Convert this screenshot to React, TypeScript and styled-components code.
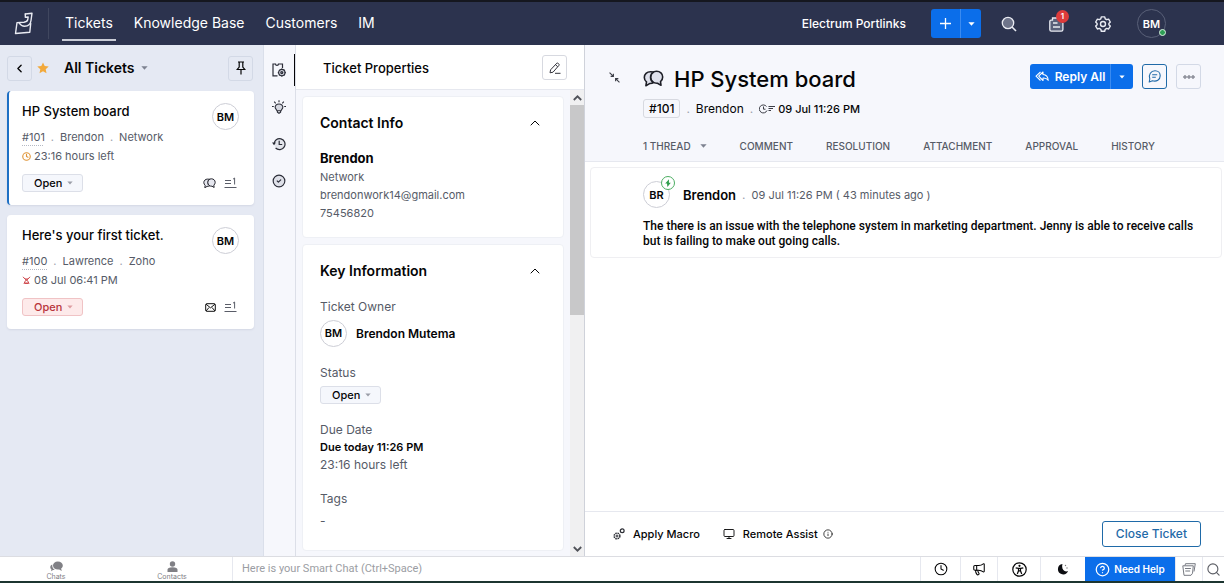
import React from "react";
import styled, { createGlobalStyle, css } from "styled-components";
import {
  ChevronLeft,
  ChevronUp,
  CircleCheck,
  CircleQuestionMark,
  Clock,
  Info,
  Megaphone,
  Monitor,
  Search,
} from "lucide-react";

const color = {
  navy: "#2c334e",
  blue: "#0b6eea",
  outline: "#1f6aa8",
  list: "#e5e9f3",
  pale: "#f6f7fc",
  line: "#e6e8ef",
  ink: "#050506",
  grey: "#565b67",
  red: "#b8343b",
};

const GlobalStyle = createGlobalStyle`
  * { box-sizing: border-box; }
  body { margin: 0; background: #fff; color: ${color.ink}; font: 400 12px/18px Inter, "Liberation Sans", sans-serif; }
  button, input, select { font: inherit; color: inherit; margin: 0; }
  button { cursor: pointer; }
  a { color: inherit; text-decoration: none; }
  h1, h2, h3, p { margin: 0; font-weight: inherit; }
  svg { display: block; flex: none; }
`;

const Page = styled.div`
  display: flex;
  flex-direction: column;
  height: 100vh;
  border-bottom: 2px solid #1c3530;
`;

/* ---------- top bar ---------- */

const TopBar = styled.header`
  display: flex;
  align-items: center;
  height: 45px;
  flex: none;
  padding: 0 58px 0 14px;
  border-top: 2px solid #15171f;
  background: ${color.navy};
  color: #fff;
`;

const Brand = styled.a`
  display: flex;
  align-items: center;
  height: 31px;
  padding-right: 14px;
  border-right: 1px solid #40475f;
`;

const Nav = styled.nav`
  display: flex;
  flex: 1;
  gap: 21px;
  padding-left: 16px;
`;

const NavLink = styled.a<{ $active?: boolean }>`
  padding: 4px 0 3px;
  font-size: 14px;
  line-height: 26px;
  border-bottom: 2px solid ${(p) => (p.$active ? "#c9ccd6" : "transparent")};
  ${(p) => p.$active && css`padding-left: 3px; padding-right: 3px; margin-left: -3px; margin-right: -3px;`}
`;

const Account = styled.span`
  font-size: 12px;
  font-weight: 500;
  margin-right: 25px;
`;

const SplitButton = styled.div<{ $tall?: boolean }>`
  display: flex;
  height: ${(p) => (p.$tall ? 29 : 25)}px;
  border-radius: 3px;
  overflow: hidden;
  background: ${color.blue};
`;

const SplitPart = styled.button<{ $divided?: boolean; $width: number }>`
  display: flex;
  align-items: center;
  justify-content: center;
  gap: 6px;
  width: ${(p) => p.$width}px;
  padding: 0;
  border: 0;
  border-left: ${(p) => (p.$divided ? "1px solid #3b8bf0" : "0")};
  background: none;
  color: #fff;
  font-size: 12px;
  font-weight: 600;
`;

const TopIcons = styled.div`
  display: flex;
  align-items: center;
  gap: 27px;
  margin: 0 24px 0 18px;
`;

const IconButton = styled.button`
  position: relative;
  display: grid;
  place-items: center;
  width: 20px;
  height: 20px;
  padding: 0;
  border: 0;
  background: none;
`;

const Count = styled.span`
  position: absolute;
  top: -4px;
  right: -3px;
  width: 13px;
  height: 13px;
  border-radius: 50%;
  background: #de3b3b;
  color: #fff;
  font-size: 8px;
  font-weight: 600;
  line-height: 13px;
  text-align: center;
`;

const Avatar = styled.span<{ $dark?: boolean }>`
  position: relative;
  flex: none;
  display: grid;
  place-items: center;
  width: ${(p) => (p.$dark ? 29 : 27)}px;
  height: ${(p) => (p.$dark ? 29 : 27)}px;
  border: 1px solid ${(p) => (p.$dark ? "#596078" : "#cdced6")};
  border-radius: 50%;
  background: ${(p) => (p.$dark ? "transparent" : "#fff")};
  font-size: 11px;
  font-weight: 600;
`;

const Online = styled.i`
  position: absolute;
  right: -1px;
  bottom: 1px;
  width: 7px;
  height: 7px;
  border: 1px solid #d9f0e0;
  border-radius: 50%;
  background: #2e9e55;
`;

const ChannelBadge = styled.span`
  position: absolute;
  top: -6px;
  right: -6px;
  display: grid;
  place-items: center;
  width: 14px;
  height: 14px;
  border: 1px solid #4cae62;
  border-radius: 50%;
  background: #fff;
`;

/* ---------- columns ---------- */

const Columns = styled.div`
  display: flex;
  flex: 1;
  min-height: 0;
`;

const ListColumn = styled.aside`
  display: flex;
  flex-direction: column;
  width: 264px;
  flex: none;
  border-right: 1px solid #dadfea;
  background: ${color.list};
`;

const ListHeader = styled.div`
  display: flex;
  align-items: center;
  height: 46px;
  padding: 0 10px 0 7px;
`;

const ViewPicker = styled.button`
  display: flex;
  align-items: center;
  gap: 6px;
  margin-right: auto;
  padding: 0 0 0 15px;
  border: 0;
  background: none;
  font-size: 14px;
  font-weight: 600;
  line-height: 20px;
`;

const BoxButton = styled.button<{ $border?: string; $color?: string; $bg?: string }>`
  display: grid;
  place-items: center;
  width: 25px;
  height: 25px;
  padding: 0;
  border: 1px solid ${(p) => p.$border ?? "#d3d9e6"};
  border-radius: 3px;
  background: ${(p) => p.$bg ?? "transparent"};
  color: ${(p) => p.$color ?? color.ink};
`;

const StarBox = styled.span`
  margin-left: 5px;
`;

const TicketList = styled.div`
  display: flex;
  flex-direction: column;
  gap: 10px;
  padding: 0 9px 0 7px;
`;

const TicketCard = styled.article<{ $selected?: boolean }>`
  display: grid;
  grid-template-columns: 1fr auto;
  padding: 10px 15px 13px 14px;
  border-left: 1px solid #fff;
  border-radius: 4px;
  background: #fff;
  box-shadow: 0 1px 2px rgba(60, 70, 110, 0.1);
  ${(p) => p.$selected && css`border-left: 2px solid #1d6fc4; padding-left: 13px;`}
`;

const TicketTitle = styled.h2`
  font-size: 13px;
  line-height: 20px;
  font-weight: 500;
  margin-bottom: 7px;
`;

const TicketText = styled.div`
  font-size: 11px;
  color: ${color.grey};
`;

const Meta = styled.div`
  display: flex;
  gap: 6px;
  line-height: 18px;
`;

const TicketId = styled.a`
  text-decoration: underline dotted #b5b9c4;
  text-underline-offset: 4px;
`;

const Due = styled.div`
  display: flex;
  align-items: center;
  gap: 3px;
  line-height: 20px;
`;

const AvatarCell = styled.div`
  padding-top: 2px;
`;

const TicketFoot = styled.div`
  grid-column: 1 / -1;
  display: flex;
  align-items: center;
  justify-content: space-between;
  margin-top: 8px;
`;

const FootIcons = styled.div`
  display: flex;
  align-items: center;
  gap: 8px;
  padding-right: 2px;
`;

const StatusWrap = styled.span<{ $red?: boolean }>`
  position: relative;
  display: flex;
  width: 61px;
  color: ${(p) => (p.$red ? color.red : color.ink)};
  > svg {
    position: absolute;
    right: 10px;
    top: 7px;
    pointer-events: none;
  }
`;

const StatusSelect = styled.select<{ $red?: boolean }>`
  appearance: none;
  width: 100%;
  height: 18px;
  padding: 0 0 0 11px;
  border: 1px solid ${(p) => (p.$red ? "#f0c3c5" : "#dcdfe8")};
  border-radius: 3px;
  background: ${(p) => (p.$red ? "#fdeaea" : "#f5f7fc")};
  font-size: 11px;
  font-weight: 500;
  line-height: 16px;
`;

const Rail = styled.nav`
  display: flex;
  flex-direction: column;
  gap: 5px;
  width: 32px;
  flex: none;
  padding-top: 9px;
  border-right: 1px solid #dcdfe8;
  background: ${color.pale};
`;

const RailButton = styled.button<{ $active?: boolean }>`
  display: grid;
  place-items: center;
  height: 32px;
  padding: 0;
  border: 0;
  border-right: 1px solid ${(p) => (p.$active ? color.ink : "transparent")};
  background: none;
  color: #2b2d38;
`;

/* ---------- ticket properties ---------- */

const Properties = styled.section`
  display: flex;
  flex-direction: column;
  width: 289px;
  flex: none;
  border-right: 1px solid #cfd2da;
`;

const PropertiesHeader = styled.div`
  display: flex;
  align-items: center;
  justify-content: space-between;
  height: 45px;
  flex: none;
  padding: 1px 17px 0 27px;
  border-bottom: 1px solid ${color.line};
`;

const PanelTitle = styled.h2`
  font-size: 13px;
  line-height: 20px;
  font-weight: 500;
`;

const PropertiesBody = styled.div`
  display: flex;
  flex: 1;
  min-height: 0;
`;

const CardStack = styled.div`
  display: flex;
  flex-direction: column;
  gap: 6px;
  flex: 1;
  padding: 6px;
  overflow: hidden;
  background: ${color.pale};
`;

const Card = styled.section`
  flex: none;
  padding: 16px 18px 15px 17px;
  border: 1px solid #eef0f5;
  border-radius: 4px;
  background: #fff;
`;

const CardHead = styled.div`
  display: flex;
  align-items: center;
  justify-content: space-between;
`;

const CardTitle = styled.h3`
  font-size: 14px;
  line-height: 20px;
  font-weight: 600;
`;

const ContactLines = styled.div`
  display: flex;
  flex-direction: column;
  margin-top: 15px;
  color: ${color.grey};
  font-size: 11px;
`;

const ContactName = styled.strong`
  color: ${color.ink};
  font-size: 13px;
  line-height: 20px;
  font-weight: 700;
`;

const Fields = styled.div`
  display: flex;
  flex-direction: column;
  gap: 17px;
  margin-top: 17px;
  padding-bottom: 6px;
  color: ${color.grey};
  font-size: 12px;
`;

const Field = styled.div<{ $gap?: number }>`
  display: flex;
  flex-direction: column;
  gap: ${(p) => p.$gap ?? 0}px;
  line-height: 17px;
`;

const FieldLabel = styled.label`
  line-height: 18px;
`;

const Strong = styled.strong<{ $small?: boolean }>`
  color: ${color.ink};
  font-size: ${(p) => (p.$small ? 11 : 12)}px;
  font-weight: 600;
`;

const Owner = styled.div`
  display: flex;
  align-items: center;
  gap: 9px;
  color: ${color.ink};
`;

const ScrollTrack = styled.div`
  display: flex;
  flex-direction: column;
  width: 14px;
  flex: none;
  background: #f0f0f1;
  color: #505258;
`;

const ScrollArrow = styled.button`
  display: grid;
  place-items: center;
  height: 15px;
  padding: 0;
  border: 0;
  background: none;
`;

const ScrollThumb = styled.div`
  height: 45%;
  margin-bottom: auto;
  background: #c8c8c9;
`;

/* ---------- conversation ---------- */

const Conversation = styled.main`
  display: flex;
  flex-direction: column;
  flex: 1;
  min-width: 0;
`;

const TicketHeader = styled.div`
  display: grid;
  grid-template-columns: 34px 1fr auto;
  flex: none;
  height: 117px;
  padding: 19px 23px 0 24px;
  border-bottom: 1px solid ${color.line};
  background: ${color.pale};
`;

const Collapse = styled.button`
  align-self: start;
  width: 12px;
  margin-top: 8px;
  padding: 0;
  border: 0;
  background: none;
`;

const Subject = styled.h1`
  display: flex;
  align-items: center;
  gap: 10px;
  font-size: 22px;
  line-height: 30px;
  font-weight: 500;
`;

const SubLine = styled.div`
  display: flex;
  align-items: center;
  gap: 6px;
  margin-top: 5px;
  font-size: 12px;
`;

const IdBadge = styled.span`
  padding: 0 5px;
  border: 1px solid #d7d9e0;
  border-radius: 3px;
  line-height: 17px;
  font-weight: 500;
`;

const Dot = styled.span`
  color: #9da1ad;
`;

const Stamp = styled.span`
  display: flex;
  align-items: center;
  gap: 3px;
  font-size: 11px;
  font-weight: 500;
`;

const Actions = styled.div`
  display: flex;
  align-items: flex-start;
  gap: 9px;
`;

const Tabs = styled.div`
  grid-column: 2 / -1;
  display: flex;
  align-items: center;
  gap: 33px;
`;

const Tab = styled.button`
  display: flex;
  align-items: center;
  gap: 9px;
  padding: 0;
  border: 0;
  background: none;
  color: ${color.grey};
  font-size: 10px;
  font-weight: 500;
  line-height: 18px;
  white-space: nowrap;
`;

const ThreadArea = styled.div`
  flex: 1;
  padding: 5px 2px 0 5px;
`;

const Thread = styled.article`
  display: flex;
  flex-direction: column;
  gap: 11px;
  padding: 13px 20px 8px 52px;
  border: 1px solid #efeff2;
  border-radius: 4px;
`;

const ThreadHead = styled.div`
  display: flex;
  align-items: center;
  gap: 6px;
`;

const ThreadName = styled.strong`
  margin-left: 7px;
  font-size: 13px;
  font-weight: 600;
`;

const ThreadTime = styled.span`
  color: ${color.grey};
  font-size: 11px;
`;

const Message = styled.p`
  font-family: Roboto, "Liberation Sans", sans-serif;
  font-size: 12px;
  font-weight: 500;
  line-height: 15px;
`;

const ActionBar = styled.footer`
  display: flex;
  align-items: center;
  gap: 23px;
  height: 45px;
  flex: none;
  padding: 0 23px 0 28px;
  border-top: 1px solid ${color.line};
`;

const PlainAction = styled.button`
  display: flex;
  align-items: center;
  gap: 8px;
  padding: 0;
  border: 0;
  background: none;
  font-size: 11px;
  font-weight: 500;
`;

const AssistLabel = styled.span`
  display: flex;
  align-items: center;
  gap: 5px;
`;

const CloseButton = styled.button`
  height: 26px;
  margin-left: auto;
  padding: 0 13px;
  border: 1px solid ${color.outline};
  border-radius: 3px;
  background: #fff;
  color: ${color.outline};
  font-size: 12px;
  font-weight: 500;
`;

/* ---------- chat bar ---------- */

const ChatBar = styled.footer`
  display: flex;
  height: 25px;
  flex: none;
  border-top: 1px solid #dcdde2;
  background: #fff;
`;

const ChatTabs = styled.div`
  display: grid;
  grid-template-columns: 112px 120px;
  width: 233px;
  border-right: 1px solid ${color.line};
`;

const ChatTab = styled.button`
  display: flex;
  flex-direction: column;
  align-items: center;
  padding: 4px 0 0;
  border: 0;
  background: none;
  color: #808085;
  font-size: 7px;
  line-height: 9px;
`;

const ChatInput = styled.input`
  flex: 1;
  min-width: 0;
  padding: 0 9px;
  border: 0;
  background: none;
  font-family: Roboto, "Liberation Sans", sans-serif;
  font-size: 11px;
  &::placeholder {
    color: #9b9da3;
    opacity: 1;
  }
`;

const BarButton = styled.button<{ $width: number; $color?: string }>`
  display: grid;
  place-items: center;
  width: ${(p) => p.$width}px;
  flex: none;
  padding: 0;
  border: 0;
  border-left: 1px solid ${color.line};
  background: none;
  color: ${(p) => p.$color ?? color.ink};
`;

const HelpButton = styled.button`
  display: flex;
  align-items: center;
  justify-content: center;
  gap: 4px;
  width: 90px;
  flex: none;
  padding: 0;
  border: 0;
  background: ${color.blue};
  color: #fff;
  font-size: 10px;
  font-weight: 600;
  white-space: nowrap;
`;

/* ---------- drawings ---------- */

const Caret = ({ fill = "currentColor", size = 7 }: { fill?: string; size?: number }) => (
  <svg width={size} height="4" viewBox="0 0 7 4" aria-hidden>
    <path d="M0.4 0.2h6.2L3.5 3.8z" fill={fill} />
  </svg>
);

const Logo = () => (
  <svg width="20" height="24" viewBox="0 0 20 24" fill="none" stroke="#e9ebf2" strokeWidth="1.4" strokeLinejoin="round" strokeLinecap="round">
    <path d="M11.300 2L18 1.200 17 8.500C16.600 11.800 14 14.200 10.500 14.200 8.500 14.200 6.500 13 5 10.800" />
    <path d="M11.300 2V5.300L14.200 5 13.700 7.800C13.300 9.300 12 10 10 10.200L3 10.600 1.500 21.500 15.800 20.200 16.700 11.500" />
  </svg>
);

const StarIcon = () => (
  <svg width="12" height="12" viewBox="0 0 12 12">
    <path d="M6 .4l1.700 3.700 4 .5-3 2.700.8 4L6 9.300l-3.500 2 .8-4-3-2.700 4-.5z" fill="#f2a93b" />
  </svg>
);

const PinIcon = () => (
  <svg width="10" height="14" viewBox="0 0 10 14" fill="none" stroke="currentColor" strokeWidth="1.200">
    <path d="M2 1h6M3.200 1v5L1.200 8.500h7.600L6.800 6V1M5 8.500V13.500" />
  </svg>
);

const ChatsIcon = ({ size = 12, fill = "none" }: { size?: number; fill?: string }) => (
  <svg width={size} height={(size * 10) / 12} viewBox="0 0 24 20" fill={fill} stroke="#1d1e26" strokeWidth="1.800" strokeLinejoin="round">
    <path d="M15.500 1.500c4 0 7 2.800 7 6.500 0 2.200-1 4-2.500 5.200l.6 4.300-4-2.300c-4.500.3-8-2.700-8-7 0-3.800 3-6.700 6.900-6.700z" />
    <path d="M8.500 2C4.500 2 1.500 4.800 1.500 8.500c0 2 1 3.800 2.500 5L3.300 18l4.200-2.500c1.800.1 3.300-.2 4.600-1C9.800 13.200 8.600 11 8.600 8.200c0-2.600 1.400-4.700 3.500-5.800C11 2.100 9.800 2 8.500 2z" />
  </svg>
);

const CountIcon = () => (
  <svg width="13" height="12" viewBox="0 0 13 12" fill="none" stroke="#5a5d68" strokeWidth="1">
    <path d="M1 3.500h6M1 6.500h6M0.500 10.500h12M9 2.200l1.600-1.200V7.500" />
  </svg>
);

const MailIcon = () => (
  <svg width="11" height="9" viewBox="0 0 11 9" fill="none" stroke="#111" strokeWidth="1">
    <rect x=".7" y=".7" width="9.600" height="7.600" rx="1" />
    <path d="M1 1.200l4.500 3.600L10 1.200M1 8l3-3.500M10 8L7 4.500" />
  </svg>
);

const OverdueIcon = () => (
  <svg width="9" height="9" viewBox="0 0 9 9" fill="none" stroke="#cf4a4e" strokeWidth="1">
    <path d="M1 .8l2 2.200h3L8 .8M3 3l3 2.200L7 8M6 3L3 5.200 2 8" />
    <path d="M3 6.500h3L6.500 8h-4z" fill="#cf4a4e" stroke="none" />
  </svg>
);

const PropertiesIcon = () => (
  <svg width="14" height="14" viewBox="0 0 14 14" fill="none" stroke="currentColor" strokeWidth="1.200">
    <path d="M5.500 12.800H1V1h2.500c0 1.800 3 1.800 3 0H10.500v4" />
    <circle cx="9.800" cy="9.600" r="3.200" fill="#d5d7e0" />
    <circle cx="9.800" cy="9.600" r="1" />
    <path d="M9.800 5.600v1M9.800 12.600v1M5.800 9.600h1M12.800 9.600h1M7 6.800l.6.600M12 11.800l.6.600M7 12.400l.6-.6M12 7.400l.6-.6" />
  </svg>
);

const BulbIcon = () => (
  <svg width="14" height="14" viewBox="0 0 14 14" fill="none" stroke="currentColor" strokeWidth="1.100">
    <path d="M5 10.800L3.200 7.800C2.800 5.500 4.500 4 7 4s4.200 1.500 3.800 3.800L9 10.800z" fill="#d5d7e0" />
    <path d="M5.400 11v1.200L7 13.300l1.600-1.100V11M7 .3v2M2.200 1.600l1.500 1.700M11.800 1.600l-1.500 1.700M0 6.500h1.800M12.200 6.500H14" />
  </svg>
);

const HistoryIcon = () => (
  <svg width="14" height="14" viewBox="0 0 14 14" fill="none" stroke="currentColor" strokeWidth="1.200">
    <path d="M2 7a5.500 5.500 0 1 1 1.600 4" fill="#e3e5ec" />
    <path d="M0 5.600h4L2 8.300z" fill="currentColor" stroke="none" />
    <path d="M7.200 3.800v3.700h3" />
  </svg>
);

const EditIcon = () => (
  <svg width="12" height="12" viewBox="0 0 12 12" fill="none" stroke="#33343c" strokeWidth="1">
    <path d="M1 10.800l.6-3L7.800 1.200c.8-.8 3 1.200 2.200 2.100L4 10.200zM6.500 2.700l2.200 2M6 11.300h5.500" />
  </svg>
);

const SearchTop = () => (
  <svg width="16" height="16" viewBox="0 0 16 16" fill="none" stroke="#e9ebf2" strokeWidth="1.300">
    <circle cx="7" cy="7" r="5.700" fill="#6e748a" />
    <path d="M11 11l4 4" strokeWidth="1.600" />
  </svg>
);

const NotesIcon = () => (
  <svg width="15" height="16" viewBox="0 0 15 16" fill="none" stroke="#e9ebf2" strokeWidth="1.300">
    <path d="M9 2H3.500v2.200H2C1.200 4.200.8 4.600.8 5.400V13.500c0 1 .6 1.600 1.500 1.600h10c1 0 1.600-.6 1.600-1.600V7" fill="#59607a" />
    <path d="M4 7h4.500M4 11h7" />
  </svg>
);

const GearIcon = () => (
  <svg width="16" height="16" viewBox="0 0 16 16" fill="none" stroke="#e9ebf2" strokeWidth="1.400" strokeLinejoin="round">
    <path d="M6.300.9h3.400l.5 1.900 1.500.9 1.900-.6 1.700 2.900-1.400 1.400v1.300l1.400 1.400-1.700 2.900-1.900-.6-1.500.9-.5 1.900H6.300l-.5-1.900-1.500-.9-1.900.6L.7 10.100l1.400-1.400V7.400L.7 6l1.700-2.900 1.900.6 1.500-.9z" />
    <circle cx="8" cy="8" r="2.500" />
  </svg>
);

const ReplyAllIcon = () => (
  <svg width="14" height="11" viewBox="0 0 14 11" fill="none" stroke="#fff" strokeWidth="1.100" strokeLinejoin="round">
    <path d="M5.500 1L1 5.200l4.500 4.300" />
    <path d="M8 1L3.700 5.200 8 9.500V7c2.500-.2 4 .5 5.200 2.300C13 6 11.200 3.700 8 3.500z" />
  </svg>
);

const CommentIcon = () => (
  <svg width="13" height="13" viewBox="0 0 13 13" fill="none" stroke="currentColor" strokeWidth="1.100" strokeLinejoin="round">
    <path d="M1.200 12l.6-3C.2 4.500 3 .8 7 .8c3 0 5.200 2.200 5.200 5 0 4-3.700 6.200-7.700 5z" />
    <path d="M4.200 4.800h5M4.200 7.200h3.600" />
  </svg>
);

const MoreIcon = () => (
  <svg width="12" height="4" viewBox="0 0 12 4" fill="#b9bbc4" stroke="#686b76" strokeWidth=".8">
    <circle cx="2" cy="2" r="1.300" />
    <circle cx="6" cy="2" r="1.300" />
    <circle cx="10" cy="2" r="1.300" />
  </svg>
);

const CollapseIcon = () => (
  <svg width="11" height="11" viewBox="0 0 10 10" fill="none" stroke="#3b3d46" strokeWidth="1">
    <path d="M.5.5L4 4M4 1.500V4H1.500M9.500 9.500L6 6M6 8.500V6h2.500" />
  </svg>
);

const StampIcon = () => (
  <svg width="16" height="10" viewBox="0 0 16 10" fill="none" stroke="#3b3d46" strokeWidth="1">
    <path d="M7.500 2.500A4 4 0 1 0 8 6.500M4.500 2.500V5.200h2M9.500 2.500H16M9.500 4.500H14M9.500 6.500H12" />
  </svg>
);

const MacroIcon = () => (
  <svg width="12" height="12" viewBox="0 0 12 12" fill="none" stroke="#2b2d34">
    <circle cx="4" cy="8" r="2.900" strokeWidth="1.400" strokeDasharray="1.600 .7" />
    <circle cx="4" cy="8" r="1" />
    <circle cx="9.200" cy="2.800" r="1.900" strokeWidth="1.200" />
  </svg>
);

const AccessIcon = () => (
  <svg width="15" height="15" viewBox="0 0 15 15" fill="none" stroke="currentColor" strokeWidth="1.200">
    <circle cx="7.500" cy="7.500" r="6.700" />
    <circle cx="7.500" cy="3.800" r="1.100" fill="currentColor" stroke="none" />
    <path d="M3.700 5.800l2.600.6h2.400l2.600-.6M6.500 6.400v2.400L5.300 12M8.500 6.400v2.400L9.700 12M6.500 8.800h2" />
  </svg>
);

const MoonIcon = () => (
  <svg width="12" height="12" viewBox="0 0 12 12" fill="#0c0d11">
    <path d="M5.500 1A5.200 5.200 0 1 0 11 8C7.500 9.500 4 6.500 5.500 1z" />
    <circle cx="8.500" cy="2.500" r=".7" fill="#777" />
    <circle cx="10" cy="5" r=".7" fill="#777" />
  </svg>
);

const NotesStack = () => (
  <svg width="14" height="13" viewBox="0 0 14 13" fill="none" stroke="#777a82" strokeWidth="1" strokeLinejoin="round">
    <path d="M3 2.500L3.500.7h9.800L12 8.500" />
    <path d="M.8 2.800h10.500l-.8 7.500-1.500 2H2zM3 5.500h5.900M3.300 8h4.800" />
  </svg>
);

const ChatsSolid = () => (
  <svg width="13" height="11" viewBox="0 0 13 11" fill="currentColor">
    <path d="M7.800.5c3 0 5 1.700 5 4 0 1.300-.7 2.400-1.700 3.100l.7 2.400-2.600-1.500c-3.400.5-6.200-1.200-6.200-4 0-2.300 2-4 4.800-4z" />
    <path d="M2.300 3.500C1 4 .3 5 .3 6.200c0 1 .5 1.700 1.200 2.300L1 10.200l2-1.200 1.800.1C3 8 2 6 2.300 3.500z" />
  </svg>
);

const PersonSolid = () => (
  <svg width="11" height="11" viewBox="0 0 11 11" fill="currentColor">
    <circle cx="5.500" cy="3" r="2.700" />
    <path d="M.5 11V8.800C.5 7.200 2 6.300 5.500 6.300s5 .9 5 2.500V11z" />
  </svg>
);

const BoltIcon = () => (
  <svg width="8" height="8" viewBox="0 0 8 8" fill="#2f9e4c">
    <path d="M5 .3L1.200 4.400h1.800L3.400 8 6.800 3.800H4.900z" />
  </svg>
);

/* ---------- composition ---------- */

type Ticket = {
  id: string;
  title: string;
  contact: string;
  account: string;
  due: string;
  overdue?: boolean;
  selected?: boolean;
};

const tickets: Ticket[] = [
  { id: "#101", title: "HP System board", contact: "Brendon", account: "Network", due: "23:16 hours left", selected: true },
  { id: "#100", title: "Here's your first ticket.", contact: "Lawrence", account: "Zoho", due: "08 Jul 06:41 PM", overdue: true },
];

const StatusPicker = ({ red, id, label }: { red?: boolean; id?: string; label?: string }) => (
  <StatusWrap $red={red}>
    <StatusSelect $red={red} id={id} aria-label={label} defaultValue="Open">
      <option>Open</option>
    </StatusSelect>
    <Caret fill={red ? "#dd9ca0" : "#9a9da7"} size={6} />
  </StatusWrap>
);

const TicketItem = ({ ticket }: { ticket: Ticket }) => (
  <TicketCard $selected={ticket.selected}>
    <div>
      <TicketTitle>{ticket.title}</TicketTitle>
      <TicketText>
        <Meta>
          <TicketId href="#">{ticket.id}</TicketId>
          <Dot>.</Dot>
          <span>{ticket.contact}</span>
          <Dot>.</Dot>
          <span>{ticket.account}</span>
        </Meta>
        <Due>
          {ticket.overdue ? <OverdueIcon /> : <Clock size={9} color="#e0963a" strokeWidth={3} />}
          {ticket.due}
        </Due>
      </TicketText>
    </div>
    <AvatarCell>
      <Avatar>BM</Avatar>
    </AvatarCell>
    <TicketFoot>
      <StatusPicker red={ticket.overdue} label={`Status of ${ticket.id}`} />
      <FootIcons>
        {ticket.overdue ? <MailIcon /> : <ChatsIcon size={13} fill="#e6e7ef" />}
        <CountIcon />
      </FootIcons>
    </TicketFoot>
  </TicketCard>
);

const App = () => (
  <Page>
    <GlobalStyle />
    <TopBar>
      <Brand href="#" aria-label="Home">
        <Logo />
      </Brand>
      <Nav>
        <NavLink href="#" $active>Tickets</NavLink>
        <NavLink href="#">Knowledge Base</NavLink>
        <NavLink href="#">Customers</NavLink>
        <NavLink href="#">IM</NavLink>
      </Nav>
      <Account>Electrum Portlinks</Account>
      <SplitButton $tall>
        <SplitPart $width={29} aria-label="Add">
          <svg width="11" height="11" viewBox="0 0 11 11" stroke="#fff" strokeWidth="1.300">
            <path d="M5.500 0v11M0 5.500h11" />
          </svg>
        </SplitPart>
        <SplitPart $width={21} $divided aria-label="Add options">
          <Caret />
        </SplitPart>
      </SplitButton>
      <TopIcons>
        <IconButton aria-label="Search"><SearchTop /></IconButton>
        <IconButton aria-label="Notifications">
          <NotesIcon />
          <Count>1</Count>
        </IconButton>
        <IconButton aria-label="Settings"><GearIcon /></IconButton>
      </TopIcons>
      <Avatar $dark>
        BM
        <Online />
      </Avatar>
    </TopBar>

    <Columns>
      <ListColumn>
        <ListHeader>
          <BoxButton aria-label="Back"><ChevronLeft size={13} strokeWidth={2.500} /></BoxButton>
          <StarBox><StarIcon /></StarBox>
          <ViewPicker>
            All Tickets
            <Caret fill="#7d8290" />
          </ViewPicker>
          <BoxButton aria-label="Pin"><PinIcon /></BoxButton>
        </ListHeader>
        <TicketList>
          {tickets.map((ticket) => (
            <TicketItem key={ticket.id} ticket={ticket} />
          ))}
        </TicketList>
      </ListColumn>

      <Rail>
        <RailButton $active aria-label="Properties"><PropertiesIcon /></RailButton>
        <RailButton aria-label="Suggestions"><BulbIcon /></RailButton>
        <RailButton aria-label="Timeline"><HistoryIcon /></RailButton>
        <RailButton aria-label="Approvals"><CircleCheck size={14} fill="#dfe1e9" /></RailButton>
      </Rail>

      <Properties>
        <PropertiesHeader>
          <PanelTitle>Ticket Properties</PanelTitle>
          <BoxButton $border="#d7d9e0" $bg="#fff" aria-label="Edit"><EditIcon /></BoxButton>
        </PropertiesHeader>
        <PropertiesBody>
          <CardStack>
            <Card>
              <CardHead>
                <CardTitle>Contact Info</CardTitle>
                <IconButton aria-label="Collapse"><ChevronUp size={16} strokeWidth={1.500} /></IconButton>
              </CardHead>
              <ContactLines>
                <ContactName>Brendon</ContactName>
                <span>Network</span>
                <span>brendonwork14@gmail.com</span>
                <span>75456820</span>
              </ContactLines>
            </Card>
            <Card>
              <CardHead>
                <CardTitle>Key Information</CardTitle>
                <IconButton aria-label="Collapse"><ChevronUp size={16} strokeWidth={1.500} /></IconButton>
              </CardHead>
              <Fields>
                <Field $gap={4}>
                  <FieldLabel as="span">Ticket Owner</FieldLabel>
                  <Owner>
                    <Avatar>BM</Avatar>
                    <Strong>Brendon Mutema</Strong>
                  </Owner>
                </Field>
                <Field $gap={4}>
                  <FieldLabel htmlFor="status">Status</FieldLabel>
                  <StatusPicker id="status" />
                </Field>
                <Field>
                  <FieldLabel as="span">Due Date</FieldLabel>
                  <Strong $small>Due today 11:26 PM</Strong>
                  <span>23:16 hours left</span>
                </Field>
                <Field $gap={4}>
                  <FieldLabel as="span">Tags</FieldLabel>
                  <span>-</span>
                </Field>
              </Fields>
            </Card>
          </CardStack>
          <ScrollTrack>
            <ScrollArrow aria-label="Scroll up">
              <svg width="9" height="6" viewBox="0 0 9 6" fill="none" stroke="currentColor" strokeWidth="1.800"><path d="M.8 5l3.700-3.700L8.200 5" /></svg>
            </ScrollArrow>
            <ScrollThumb />
            <ScrollArrow aria-label="Scroll down">
              <svg width="9" height="6" viewBox="0 0 9 6" fill="none" stroke="currentColor" strokeWidth="1.800"><path d="M.8 1l3.700 3.700L8.200 1" /></svg>
            </ScrollArrow>
          </ScrollTrack>
        </PropertiesBody>
      </Properties>

      <Conversation>
        <TicketHeader>
          <Collapse aria-label="Collapse ticket"><CollapseIcon /></Collapse>
          <div>
            <Subject>
              <ChatsIcon size={21} fill="#dfe1ec" />
              HP System board
            </Subject>
            <SubLine>
              <IdBadge>#101</IdBadge>
              <Dot>.</Dot>
              <span>Brendon</span>
              <Dot>.</Dot>
              <Stamp><StampIcon />09 Jul 11:26 PM</Stamp>
            </SubLine>
          </div>
          <Actions>
            <SplitButton>
              <SplitPart $width={80}><ReplyAllIcon />Reply All</SplitPart>
              <SplitPart $width={23} $divided aria-label="Reply options"><Caret size={6} /></SplitPart>
            </SplitButton>
            <BoxButton $border={color.outline} $color={color.outline} aria-label="Comment"><CommentIcon /></BoxButton>
            <BoxButton aria-label="More"><MoreIcon /></BoxButton>
          </Actions>
          <Tabs>
            <Tab>1 THREAD <Caret fill="#7d8290" /></Tab>
            <Tab>COMMENT</Tab>
            <Tab>RESOLUTION</Tab>
            <Tab>ATTACHMENT</Tab>
            <Tab>APPROVAL</Tab>
            <Tab>HISTORY</Tab>
          </Tabs>
        </TicketHeader>
        <ThreadArea>
          <Thread>
            <ThreadHead>
              <Avatar>
                BR
                <ChannelBadge><BoltIcon /></ChannelBadge>
              </Avatar>
              <ThreadName>Brendon</ThreadName>
              <Dot>.</Dot>
              <ThreadTime>09 Jul 11:26 PM ( 43 minutes ago )</ThreadTime>
            </ThreadHead>
            <Message>
              The there is an issue with the telephone system in marketing department. Jenny is able to receive calls but is
              failing to make out going calls.
            </Message>
          </Thread>
        </ThreadArea>
        <ActionBar>
          <PlainAction><MacroIcon />Apply Macro</PlainAction>
          <PlainAction>
            <Monitor size={12} strokeWidth={1.800} />
            <AssistLabel>Remote Assist<Info size={10} strokeWidth={1.800} /></AssistLabel>
          </PlainAction>
          <CloseButton>Close Ticket</CloseButton>
        </ActionBar>
      </Conversation>
    </Columns>

    <ChatBar>
      <ChatTabs>
        <ChatTab><ChatsSolid />Chats</ChatTab>
        <ChatTab><PersonSolid />Contacts</ChatTab>
      </ChatTabs>
      <ChatInput aria-label="Smart Chat" placeholder="Here is your Smart Chat (Ctrl+Space)" />
      <BarButton $width={40} aria-label="Recent"><Clock size={14} strokeWidth={1.800} /></BarButton>
      <BarButton $width={37} aria-label="Announcements"><Megaphone size={14} strokeWidth={1.800} /></BarButton>
      <BarButton $width={43} aria-label="Accessibility"><AccessIcon /></BarButton>
      <BarButton $width={45} aria-label="Night mode"><MoonIcon /></BarButton>
      <HelpButton><CircleQuestionMark size={15} />Need Help</HelpButton>
      <BarButton $width={27} aria-label="Notes"><NotesStack /></BarButton>
      <BarButton $width={22} $color="#5b5d64" aria-label="Find"><Search size={15} strokeWidth={1.800} /></BarButton>
    </ChatBar>
  </Page>
);

export default App;
